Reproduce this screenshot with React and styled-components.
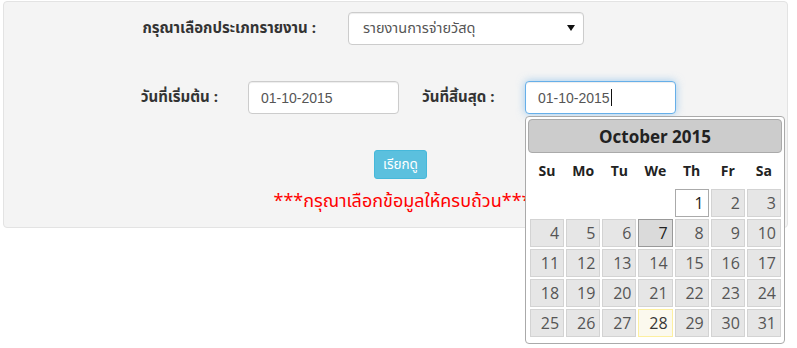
import React from "react";
import styled, { createGlobalStyle } from "styled-components";

const Global = createGlobalStyle`
  html, body { margin: 0; padding: 0; background: #fff; }
  body { font-family: Tahoma, "Noto Sans Thai", "Liberation Sans", "DejaVu Sans", sans-serif; color: #333; }
  #root { padding: 1px 0 0 3px; min-height: 347px; }
`;

const Well = styled.div`
  width: 785px;
  box-sizing: border-box;
  min-height: 227px;
  background: #f4f4f4;
  border: 1px solid #e3e3e3;
  border-radius: 4px;
  padding: 10px 0 10px 0;
  display: flex;
  flex-direction: column;
`;

const Row = styled.div`
  display: flex;
  align-items: center;
  height: 33px;
  margin-bottom: ${(p) => p.$mb || 0}px;
`;

const Label = styled.div`
  width: ${(p) => p.$w}px;
  margin-left: ${(p) => p.$ml || 0}px;
  text-align: ${(p) => p.$align || "right"};
  font-size: 15px;
  font-weight: bold;
  color: #333;
  white-space: nowrap;
`;

const SelectBox = styled.div`
  box-sizing: border-box;
  width: 236px;
  height: 33px;
  margin-left: 32px;
  background: #fff;
  border: 1px solid #ccc;
  border-radius: 4px;
  box-shadow: inset 0 1px 1px rgba(0, 0, 0, 0.075);
  display: flex;
  align-items: center;
  justify-content: space-between;
  padding: 0 8px 0 14px;
  font-size: 14.5px;
  color: #555;
`;

const Arrow = styled.svg`
  width: 8px;
  height: 6px;
  margin-top: -2px;
`;

const FieldWrap = styled.div`
  position: relative;
  margin-left: ${(p) => p.$ml || 0}px;
`;

const Field = styled.div`
  box-sizing: border-box;
  width: 151px;
  height: 33px;
  background: #fff;
  border: 1px solid ${(p) => (p.$focused ? "#66afe9" : "#ccc")};
  border-radius: 4px;
  box-shadow: ${(p) =>
    p.$focused
      ? "inset 0 1px 1px rgba(0,0,0,.075), 0 0 8px rgba(102,175,233,.6)"
      : "inset 0 1px 1px rgba(0,0,0,.075)"};
  display: flex;
  align-items: center;
  padding: 0 12px;
  font-family: "Liberation Sans", Arial, sans-serif;
  font-size: 14px;
  color: #555;
`;

const Caret = styled.span`
  display: inline-block;
  width: 1px;
  height: 17px;
  background: #111;
  margin-left: 1px;
`;

const Actions = styled.div`
  display: flex;
  flex-direction: column;
  align-items: center;
  padding-left: 8px;
`;

const Button = styled.button`
  box-sizing: border-box;
  width: 53px;
  height: 29px;
  background: #5bc0de;
  border: 1px solid #46b8da;
  border-radius: 3px;
  color: #fff;
  font-family: inherit;
  font-size: 13.5px;
  padding: 0;
  margin-left: 2px;
`;

const Warning = styled.div`
  margin-top: 12px;
  margin-left: 6px;
  color: #ff0000;
  font-size: 18px;
  line-height: 22px;
`;

const Picker = styled.div`
  position: absolute;
  top: 35px;
  left: 0px;
  width: 260px;
  box-sizing: border-box;
  background: #fff;
  border: 1px solid #aaa;
  border-radius: 4px;
  padding: 2px 2px 5px 2px;
  z-index: 5;
`;

const PickerHeader = styled.div`
  height: 34px;
  box-sizing: border-box;
  background: #cccccc;
  border: 1px solid #aaa;
  border-radius: 4px;
  display: flex;
  align-items: center;
  justify-content: center;
  font-family: "Open Sans", "DejaVu Sans", sans-serif;
  font-weight: bold;
  font-size: 17px;
  color: #222;
`;

const Grid = styled.div`
  display: grid;
  grid-template-columns: repeat(7, 1fr);
  width: 253px;
  margin: 0 0 0 1px;
`;

const DayName = styled.div`
  height: 35px;
  display: flex;
  align-items: center;
  justify-content: center;
  font-family: "Open Sans", "DejaVu Sans", sans-serif;
  font-weight: bold;
  font-size: 14px;
  color: #222;
`;

const Cell = styled.div`
  padding: 1px;
  height: 28px;
`;

const stateStyles = {
  default: { bg: "#e6e6e6", border: "#d3d3d3", color: "#555" },
  active: { bg: "#ffffff", border: "#aaa", color: "#212121" },
  hover: { bg: "#dadada", border: "#999", color: "#212121" },
  highlight: { bg: "#fbf9ee", border: "#fcefa1", color: "#363636" },
};

const Day = styled.div`
  box-sizing: border-box;
  height: 28px;
  background: ${(p) => stateStyles[p.$state].bg};
  border: 1px solid ${(p) => stateStyles[p.$state].border};
  color: ${(p) => stateStyles[p.$state].color};
  font-family: "Open Sans", "DejaVu Sans", sans-serif;
  font-size: 16px;
  display: flex;
  align-items: center;
  justify-content: flex-end;
  padding-right: 4px;
`;

const dayNames = ["Su", "Mo", "Tu", "We", "Th", "Fr", "Sa"];

function stateFor(d) {
  if (d === 1) return "active";
  if (d === 7) return "hover";
  if (d === 28) return "highlight";
  return "default";
}

export default function App() {
  const cells = [];
  for (let i = 0; i < 4; i++) cells.push(null);
  for (let d = 1; d <= 31; d++) cells.push(d);

  return (
    <>
      <Global />
      <Well>
        <Row $mb={36}>
          <Label $w={312}>กรุณาเลือกประเภทรายงาน :</Label>
          <SelectBox>
            <span>รายงานการจ่ายวัสดุ</span>
            <Arrow viewBox="0 0 8 6">
              <path d="M0 0 H8 L4 6 Z" fill="#111" />
            </Arrow>
          </SelectBox>
        </Row>
        <Row $mb={36}>
          <Label $w={214}>วันที่เริ่มต้น :</Label>
          <FieldWrap $ml={30}>
            <Field>01-10-2015</Field>
          </FieldWrap>
          <Label $w={103} $ml={23} $align="left">
            วันที่สิ้นสุด :
          </Label>
          <FieldWrap>
            <Field $focused>
              01-10-2015
              <Caret />
            </Field>
            <Picker>
              <PickerHeader>October 2015</PickerHeader>
              <Grid>
                {dayNames.map((n) => (
                  <DayName key={n}>{n}</DayName>
                ))}
                {cells.map((d, i) => (
                  <Cell key={i}>{d && <Day $state={stateFor(d)}>{d}</Day>}</Cell>
                ))}
              </Grid>
            </Picker>
          </FieldWrap>
        </Row>
        <Actions>
          <Button>เรียกดู</Button>
          <Warning>***กรุณาเลือกข้อมูลให้ครบถ้วน***</Warning>
        </Actions>
      </Well>
    </>
  );
}
